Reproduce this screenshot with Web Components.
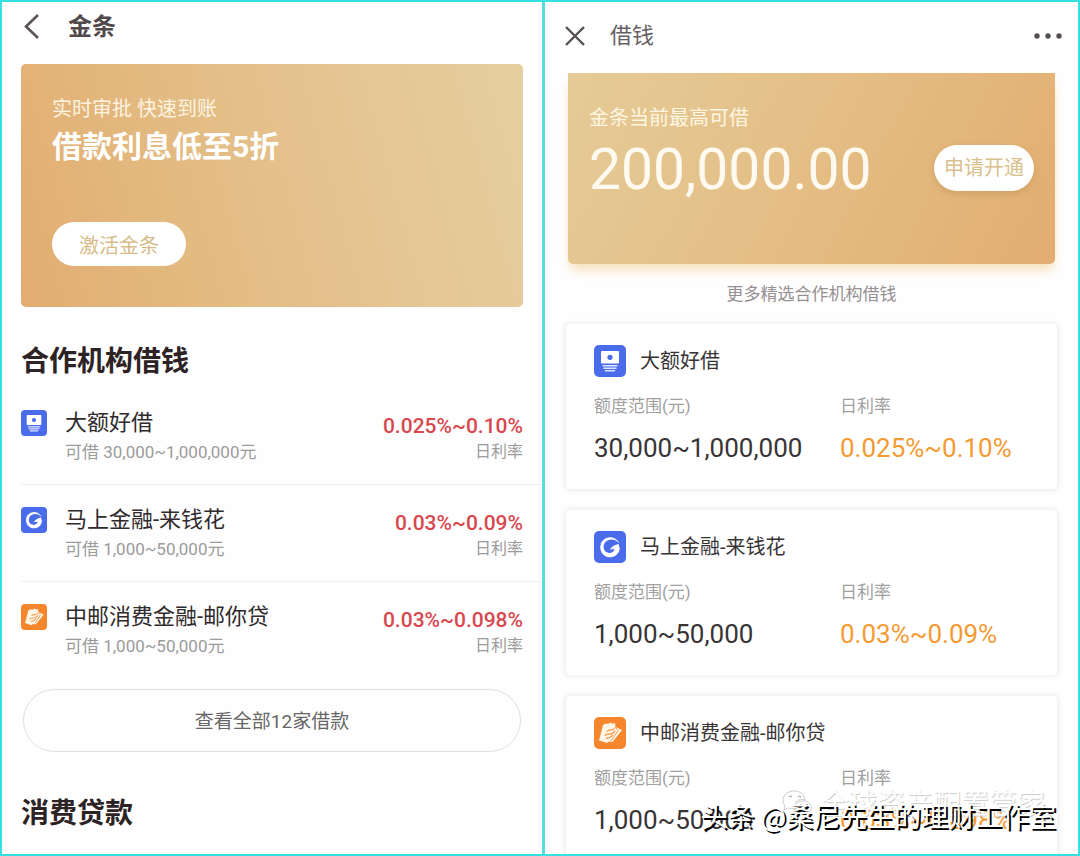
<!DOCTYPE html>
<html lang="zh-CN">
<head>
<meta charset="utf-8">
<meta name="viewport" content="width=device-width, initial-scale=1">
<title>金条借钱</title>
<style>
html, body { margin: 0; height: 100%; }
body { font-family: Roboto, "Noto Sans CJK SC", sans-serif; color: #333; background: #fefefe; }
</style>
</head>
<body>
<loan-compare></loan-compare>
<script>
const RESET = `
*, *::before { box-sizing: border-box; }
h1, h2, h3, p, ul, dl, dd { margin: 0; padding: 0; }
button { font: inherit; border: 0; padding: 0; background: none; cursor: pointer; }
svg { display: block; }
`;
const define = (name, html, setup) => {
  const template = document.createElement('template');
  template.innerHTML = html;
  customElements.define(name, class extends HTMLElement {
    constructor() {
      super();
      this.attachShadow({ mode: 'open' }).append(template.content.cloneNode(true));
    }
    connectedCallback() { if (setup) setup(this, this.shadowRoot); }
  });
};

const ICONS = {
  card: `<rect width="32" height="32" rx="5" fill="#4a6bea"/>
    <path d="M8 6h16a1 1 0 0 1 1 1v10.500a1 1 0 0 1-1 1H8a1 1 0 0 1-1-1V7a1 1 0 0 1 1-1z" fill="#fff"/>
    <circle cx="16" cy="12.300" r="2.600" fill="#4a6bea"/>
    <path d="M9 20.700h14M10 23.200h12M11.500 25.700h9" stroke="#dfe6ff" stroke-width="1.500" stroke-linecap="round"/>`,
  swirl: `<rect width="32" height="32" rx="5" fill="#4a6bea"/>
    <path d="M24.500 11.500A9.800 9.800 0 1 0 25.800 17.500l-1.300-4.500c-3.500.6-6.500 2.500-8.800 5.500l4.800-.5c-.8 3.200-4 4.800-7.200 3.600-4.100-1.700-4.900-6.900-1.900-10.500 3-3.400 9.300-3.600 13.100.4z" fill="#fff"/>
    <path d="M24.500 11.500A9.800 9.800 0 0 0 7 13" fill="none" stroke="#fff" stroke-width="1"/>`,
  notes: `<rect width="32" height="32" rx="5" fill="#f5862b"/>
    <path d="M9 8l3-1.500 2 .5 2.500-1.500 2 1.300 2.500-.8.500 4 6.500 3-9.500 12-3.500-.5-2 1.500-8-2.500z" fill="#fff6e8"/>
    <path d="M13 14.500c2-3 4.500 0 7.500-3M10.500 18.500c4-3 6 1 10.500-4.500M12 21c3 1 5-1 7-3" fill="none" stroke="#f5a25a" stroke-width="1.400"/>
    <path d="M17 24l7-10.500-3-3.500" fill="none" stroke="#f5862b" stroke-width=".8"/>`
};

customElements.define('brand-icon', class extends HTMLElement {
  static observedAttributes = ['name'];
  constructor() {
    super();
    this.attachShadow({ mode: 'open' }).innerHTML = `<style>
:host { display: block; flex: none; width: 32px; height: 32px; }
svg { display: block; width: 100%; height: 100%; }
</style><svg viewBox="0 0 32 32" aria-hidden="true"></svg>`;
  }
  attributeChangedCallback(attribute, previous, value) {
    this.shadowRoot.querySelector('svg').innerHTML = ICONS[value] || '';
  }
});

define('gold-banner', `<style>${RESET}
:host { display: block; height: 243px; padding: 29px 31px 0; border-radius: 5px; color: #fff;
  background: linear-gradient(75deg, #e2ad70 0%, #e3bc83 38%, #e5c492 65%, #e5cf9f 100%); }
p { font-size: 20px; line-height: 32px; color: #fdf3e0; }
h2 { font-size: 30px; line-height: 44px; font-weight: 700; }
button { margin-top: 53px; width: 134px; height: 44px; border-radius: 22px; background: #fff; color: #d6bb88; font-size: 20px; }
</style><p>实时审批 快速到账</p><h2>借款利息低至5折</h2><button type="button">激活金条</button>`);

define('loan-row', `<style>${RESET}
:host { display: flex; align-items: flex-start; height: 97px; padding: 20px 18px 0 0; border-bottom: 1px solid #efefef; }
:host(:last-of-type) { border-bottom-color: transparent; }
brand-icon { width: 26px; height: 26px; margin: 2px 18px 0 0; }
.text { flex: 1; }
h3 { font-size: 22px; line-height: 30px; font-weight: 400; color: #2f2a2c; }
p { font-size: 16px; line-height: 28px; color: #9b9b9b; white-space: nowrap; }
.text p { font-size: 17px; }
.rate { text-align: right; }
.rate strong { display: block; font-size: 21px; line-height: 36px; font-weight: 500; color: #d9474f; }
.rate p { line-height: 16px; }
</style><brand-icon></brand-icon>
<div class="text"><h3><slot></slot></h3><p></p></div>
<div class="rate"><strong></strong><p>日利率</p></div>`,
  (el, root) => {
    root.querySelector('brand-icon').setAttribute('name', el.getAttribute('icon'));
    root.querySelector('.text p').textContent = '可借 ' + el.getAttribute('range') + '元';
    root.querySelector('strong').textContent = el.getAttribute('rate');
  });

define('gold-page', `<style>${RESET}
:host { display: block; padding: 0 19px; background: #fefefe; }
header { display: flex; align-items: center; height: 50px; margin-bottom: 12px; gap: 25px; }
h1 { font-size: 24px; line-height: 36px; font-weight: 700; color: #51484b; }
h2 { font-size: 28px; line-height: 40px; font-weight: 700; color: #2d2325; }
.list { margin: 35px -18px 10px 0; }
.list h2 { margin-bottom: 6px; }
.all { display: block; width: calc(100% - 4px); height: 63px; margin: 0 2px 42px; padding-bottom: 2px; border: 1px solid #dedede; border-radius: 32px; font-size: 19px; color: #666; }
</style>
<header><button type="button" aria-label="返回"><svg width="22" height="28" viewBox="0 0 22 28"><path d="M17 2L5 13.500 17 25" fill="none" stroke="#5c5356" stroke-width="2.600"/></svg></button><h1>金条</h1></header>
<gold-banner></gold-banner>
<section class="list"><h2>合作机构借钱</h2>
<loan-row icon="card" range="30,000~1,000,000" rate="0.025%~0.10%">大额好借</loan-row>
<loan-row icon="swirl" range="1,000~50,000" rate="0.03%~0.09%">马上金融-来钱花</loan-row>
<loan-row icon="notes" range="1,000~50,000" rate="0.03%~0.098%">中邮消费金融-邮你贷</loan-row>
</section>
<button type="button" class="all">查看全部12家借款</button>
<h2>消费贷款</h2>`);

define('quota-banner', `<style>${RESET}
:host { display: flex; align-items: flex-start; justify-content: space-between; height: 191px; padding: 29px 21px 0; border-radius: 0 0 5px 5px;
  background: linear-gradient(118deg, #e5cb97 0%, #e4bf87 45%, #e2ad70 100%); box-shadow: 0 8px 12px -2px #f7dfb9; }
p { font-size: 20px; line-height: 32px; color: #fff6e2; }
strong { display: block; font-size: 57px; line-height: 72px; font-weight: 400; color: #fffaf0; }
button { width: 100px; height: 46px; margin-top: 43px; padding-bottom: 4px; border-radius: 23px; background: #fff; color: #d9c08d; font-size: 20px; box-shadow: 0 3px 6px #bd935688; }
</style><div><p>金条当前最高可借</p><strong>200,000.00</strong></div><button type="button">申请开通</button>`);

define('loan-card', `<style>${RESET}
:host { display: block; padding: 21px 0 21px 28px; border: 1px solid #f5f3f4; border-radius: 5px; background: #fff; box-shadow: 0 0 5px #ebe8ea; }
header { display: flex; align-items: center; gap: 14px; height: 32px; }
h3 { font-size: 20px; line-height: 32px; font-weight: 400; color: #383436; }
dl { display: grid; grid-template-columns: 246fr 217fr; margin-top: 17px; }
dt { font-size: 17px; line-height: 24px; color: #a0a0a0; }
dd { margin-top: 10px; font-size: 26px; line-height: 40px; color: #383436; white-space: nowrap; }
.rate { color: #f59a33; }
</style><header><brand-icon></brand-icon><h3><slot></slot></h3></header>
<dl><div><dt>额度范围(元)</dt><dd class="range"></dd></div><div><dt>日利率</dt><dd class="rate"></dd></div></dl>`,
  (el, root) => {
    root.querySelector('brand-icon').setAttribute('name', el.getAttribute('icon'));
    root.querySelector('.range').textContent = el.getAttribute('range');
    root.querySelector('.rate').textContent = el.getAttribute('rate');
  });

define('borrow-page', `<style>${RESET}
:host { display: block; padding: 0 20px; background: #fefefe; }
header { display: flex; align-items: center; height: 67px; margin-bottom: 4px; }
h1 { flex: 1; margin-left: 25px; font-size: 22px; line-height: 32px; font-weight: 400; color: #656063; }
.more { margin-right: -5px; }
quota-banner { margin: 0 3px; }
.caption { margin: 14px 0 13px; text-align: center; font-size: 17px; line-height: 32px; color: #969092; }
.cards { display: grid; gap: 19px; }
</style>
<header><button type="button" aria-label="关闭"><svg width="20" height="20" viewBox="0 0 20 20"><path d="M1 1l18 18M19 1L1 19" stroke="#565053" stroke-width="2.400"/></svg></button><h1>借钱</h1>
<button type="button" class="more" aria-label="更多"><svg width="30" height="8" viewBox="0 0 30 8" fill="#565053"><circle cx="4" cy="4" r="2.700"/><circle cx="15" cy="4" r="2.700"/><circle cx="26" cy="4" r="2.700"/></svg></button></header>
<quota-banner></quota-banner>
<p class="caption">更多精选合作机构借钱</p>
<div class="cards">
<loan-card icon="card" range="30,000~1,000,000" rate="0.025%~0.10%">大额好借</loan-card>
<loan-card icon="swirl" range="1,000~50,000" rate="0.03%~0.09%">马上金融-来钱花</loan-card>
<loan-card icon="notes" range="1,000~50,000" rate="0.03%~0.098%">中邮消费金融-邮你贷</loan-card>
</div>`);

define('water-mark', `<style>${RESET}
:host { display: block; position: absolute; right: 22px; bottom: 18px; font-family: "Noto Sans CJK SC", sans-serif; color: #fff; white-space: nowrap; text-align: right; }
.source { display: flex; align-items: center; justify-content: flex-end; gap: 8px; margin: 0 11px -26px 0; font-size: 28px; line-height: 40px; text-shadow: 1px 1px 1px #ccc; }
.author { position: relative; font-size: 27px; line-height: 40px; text-shadow: 2px 2px 0 #000; }
</style>
<p class="source"><svg width="32" height="28" viewBox="0 0 32 28" fill="none" stroke="#ccc"><path d="M4 18C-1 11 4 3 13 3c7 0 11 4 11 9-6-2-11 2-10 8-3 1-5 0-7 0l-4 2z" fill="#fff"/><path d="M14 19c1-7 13-9 16-1 1 4-1 5-2 6v2l-4-1c-6 0-9-2-10-6z" fill="#fff"/><path d="M8 9q1.500-2 3 0M17 9q1.500-2 3 0M19 17q1-1 2 0M25 17q1-1 2 0" stroke="#888"/></svg>全球资产配置管家</p>
<p class="author">头条 @桑尼先生的理财工作室</p>`);

define('loan-compare', `<style>${RESET}
:host { box-sizing: border-box; display: grid; grid-template-columns: 543fr 533fr; grid-template-rows: 100%; position: relative; height: 100vh; min-height: 480px; overflow: hidden; border: 2px solid #35e0de; }
gold-page, borrow-page { min-width: 0; min-height: 0; overflow: hidden; }
gold-page { border-right: 3px solid #55dedc; }
</style><gold-page></gold-page><borrow-page></borrow-page><water-mark></water-mark>`);
</script>
</body>
</html>
